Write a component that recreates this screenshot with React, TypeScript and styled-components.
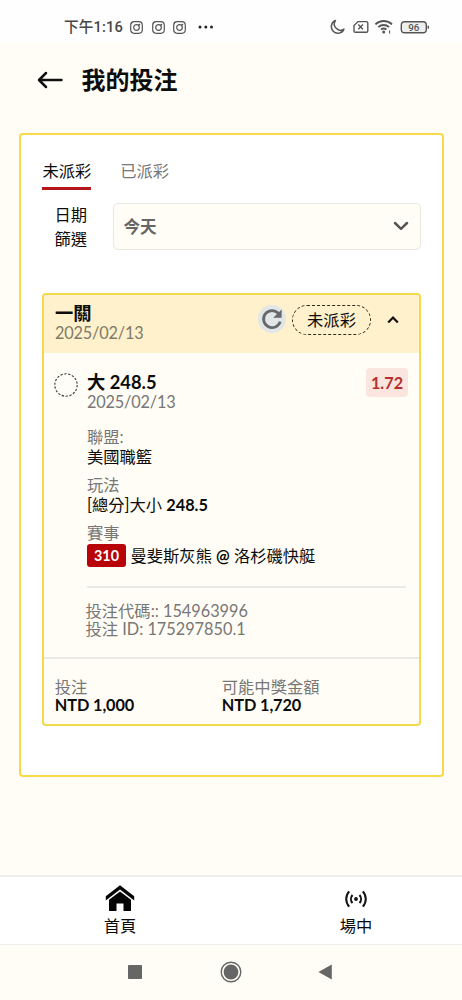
import React from 'react';
import styled, { createGlobalStyle } from 'styled-components';

const GlobalStyle = createGlobalStyle`
  * { box-sizing: border-box; }
  body {
    margin: 0;
    background: #fffdf5;
    color: #0c0c0c;
    font-family: Lato, "Noto Sans CJK TC", sans-serif;
    font-size: 16.3px;
  }
`;

const Screen = styled.div`
  width: 462px;
  height: 1000px;
  display: flex;
  flex-direction: column;
  overflow: hidden;
`;

const StatusBar = styled.header`
  height: 42px;
  padding: 13px 31px 0 64px;
  display: flex;
  justify-content: space-between;
  background: #fefefe;
  color: #474747;
`;

const StatusGroup = styled.div<{ $gap: number }>`
  height: 28px;
  display: flex;
  align-items: center;
  gap: ${p => p.$gap}px;
`;

const Clock = styled.span`
  font: 500 14.7px/28px Roboto, "Noto Sans CJK SC", sans-serif;
  letter-spacing: 0.1px;
  margin-right: -1px;
`;

const MoreDots = styled.svg`
  margin-left: 1.5px;
`;

const TitleBar = styled.div`
  height: 91px;
  padding: 16px 0 0 37px;
  display: flex;
  align-items: flex-start;
  gap: 17.5px;
`;

const Title = styled.h1`
  margin: 0;
  font-size: 24px;
  font-weight: 600;
  line-height: 44px;
`;

const BackIcon = styled.svg`
  display: block;
  margin-top: 12px;
`;

const Panel = styled.main`
  height: 644px;
  margin: 0 18.5px 0 19px;
  padding: 24px 20.5px 0 21px;
  border: 2px solid #f8da48;
  border-radius: 4px;
  background: #fff;
`;

const Tabs = styled.nav`
  display: flex;
  gap: 29px;
  padding-left: 0.4px;
  height: 44px;
`;

const Tab = styled.div<{ $active?: boolean }>`
  height: 31px;
  line-height: 24px;
  color: ${p => (p.$active ? '#0c0c0c' : '#777')};
  border-bottom: 3px solid ${p => (p.$active ? '#b5171b' : 'transparent')};
`;

const FilterRow = styled.div`
  display: flex;
  justify-content: space-between;
  height: 47px;
`;

const FilterLabel = styled.div`
  width: 34px;
  margin-left: 12.4px;
  line-height: 24px;
`;

const Select = styled.div`
  width: 308px;
  height: 47px;
  padding: 0 11px 1px 9.5px;
  display: flex;
  align-items: center;
  justify-content: space-between;
  border: 1px solid #e9e7e0;
  border-radius: 5px;
  background: #fffdf5;
  color: #666;
  font-size: 16.6px;
  font-weight: 600;
`;

const Ticket = styled.section`
  height: 433px;
  margin-top: 43px;
  border: 2px solid #f3d94c;
  border-radius: 4px;
  background: #fffdf5;
  overflow: hidden;
`;

const TicketHead = styled.div`
  height: 58px;
  padding: 8px 20px 0 11px;
  display: flex;
  justify-content: space-between;
  background: #fef1cb;
`;

const HeadActions = styled.div`
  height: 34px;
  display: flex;
  align-items: center;
`;

const Refresh = styled.div`
  width: 28px;
  height: 28px;
  margin-top: -2px;
  display: grid;
  place-items: center;
  border-radius: 50%;
  background: #e2e6e7;
`;

const StatusPill = styled.div`
  width: 79px;
  height: 30px;
  margin: 0 16px 0 6px;
  border: 1px dashed #302b1d;
  border-radius: 15px;
  line-height: 27px;
  text-align: center;
`;

const Line = styled.div<{ $tone?: 'muted'; $bold?: boolean }>`
  height: 19.5px;
  line-height: 19.5px;
  white-space: nowrap;
  color: ${p => (p.$tone === 'muted' ? '#777' : '#0c0c0c')};
  font-weight: ${p => (p.$bold ? 700 : 400)};
`;

const Heading = styled(Line)`
  font-size: 18.3px;
  line-height: 20.5px;
`;

const DateLine = styled(Line)`
  letter-spacing: -0.17px;
`;

const HeadDate = styled(DateLine)`
  color: #817a68;
`;

const Selection = styled.div`
  height: 69px;
  padding: 19px 11px 0 10px;
  display: flex;
`;

const DashedCircle = styled.svg`
  display: block;
  margin-top: 1px;
`;

const SelectionText = styled.div`
  flex: 1;
  margin-left: 9px;
`;

const Odds = styled.div`
  width: 42px;
  height: 29px;
  margin-top: -4px;
  border-radius: 4px;
  background: #fae5df;
  color: #b5302c;
  font-weight: 700;
  line-height: 29px;
  text-align: center;
`;

const Details = styled.div`
  margin: 5px 13px 0 43px;
  height: 161px;
  border-bottom: 2px solid #eceae5;
`;

const Field = styled.div`
  height: 48.2px;
`;

const Matchup = styled.div`
  display: flex;
  align-items: center;
  gap: 4.5px;
  height: 24px;
  white-space: nowrap;
`;

const GameNumber = styled.span`
  width: 39px;
  height: 23px;
  margin-top: 1px;
  border-radius: 3px;
  background: #b80408;
  color: #fff;
  font-size: 14.4px;
  font-weight: 700;
  line-height: 23px;
  text-align: center;
`;

const Strong = styled.span`
  font-weight: 700;
`;

const Codes = styled.div`
  height: 71px;
  padding: 13px 0 0 41.5px;
  border-bottom: 2px solid #eceae5;
  ${Line} { height: 18px; }
`;

const Totals = styled.div`
  display: grid;
  grid-template-columns: 167px 1fr;
  padding: 17.6px 0 0 10.8px;
  ${Line} { height: 18px; }
`;

const Amount = styled(Line)`
  letter-spacing: -0.1px;
`;

const BottomNav = styled.nav`
  height: 70px;
  margin-top: 98px;
  display: grid;
  grid-template-columns: 240px 232px;
  border: solid #f0efed;
  border-width: 2px 0 1px;
  background: #fff;
`;

const NavItem = styled.div`
  display: flex;
  flex-direction: column;
  align-items: center;
  padding-top: 7px;
  line-height: 24px;
  svg { display: block; }
`;

const SystemBar = styled.footer`
  flex: 1;
  padding: 0 0 1px 128px;
  display: flex;
  align-items: center;
`;

const Instagram = () => (
  <svg width="13" height="13" viewBox="0 0 13 13" fill="none" stroke="#555" strokeWidth="1.2">
    <rect x=".7" y=".7" width="11.6" height="11.6" rx="3.5" />
    <circle cx="6.5" cy="6.5" r="2.8" />
    <path d="M8.6 4.3 10 3" />
  </svg>
);

export default function App() {
  return (
    <>
      <GlobalStyle />
      <Screen>
        <StatusBar>
          <StatusGroup $gap={8.5}>
            <Clock>下午1:16</Clock>
            <Instagram />
            <Instagram />
            <Instagram />
            <MoreDots width="17" height="4" viewBox="0 0 17 4" fill="#222">
              <circle cx="4" cy="2" r="1.5" />
              <circle cx="9.8" cy="2" r="1.5" />
              <circle cx="15.5" cy="2" r="1.5" />
            </MoreDots>
          </StatusGroup>
          <StatusGroup $gap={0}>
            <svg width="102" height="18" viewBox="0 0 102 18" fill="none" stroke="#555" strokeWidth="1.4">
              <path d="M6.5 2.5A6.6 6.6 0 1 0 15 11.2 6.2 6.2 0 0 1 6.5 2.5Z" strokeLinejoin="round" />
              <path d="M29 3.6h8.5a1.3 1.3 0 0 1 1.3 1.3v8a1.3 1.3 0 0 1-1.3 1.3H26.3a1.3 1.3 0 0 1-1.3-1.3V7.6Z" />
              <path d="m29.3 6.6 4.6 4.6m0-4.6-4.6 4.6" />
              <path d="M46.4 6.4a12 12 0 0 1 16.6 0M49.3 9.1a8 8 0 0 1 10.8 0M52 11.6a4.2 4.2 0 0 1 5.4 0" strokeWidth="1.9" />
              <circle cx="54.7" cy="14" r="1.5" fill="#555" stroke="none" />
              <path d="M60.6 12.5v3" strokeWidth="1.1" />
              <rect x="72.3" y="3.7" width="25" height="11" rx="3.3" fill="#eee" />
              <path d="M99.3 7.7v3" strokeWidth="1.5" />
              <text x="84.8" y="12.7" textAnchor="middle" fill="#555" stroke="none" fontSize="9.8" fontWeight="500" fontFamily="Roboto, sans-serif">96</text>
            </svg>
          </StatusGroup>
        </StatusBar>

        <TitleBar>
          <BackIcon width="27" height="20" viewBox="0 0 27 20" fill="none" stroke="#111" strokeWidth="2.5">
            <path d="M9 3 2 10l7 7M2.5 10h22" strokeLinejoin="round" strokeLinecap="round" />
          </BackIcon>
          <Title>我的投注</Title>
        </TitleBar>

        <Panel>
          <Tabs>
            <Tab $active>未派彩</Tab>
            <Tab>已派彩</Tab>
          </Tabs>
          <FilterRow>
            <FilterLabel>日期篩選</FilterLabel>
            <Select>
              今天
              <svg width="16" height="10" viewBox="0 0 16 10" fill="none" stroke="#555" strokeWidth="2.5" strokeLinecap="round" strokeLinejoin="round">
                <path d="m2 2 6 5.8L14 2" />
              </svg>
            </Select>
          </FilterRow>

          <Ticket>
            <TicketHead>
              <div>
                <Heading $bold>一關</Heading>
                <HeadDate>2025/02/13</HeadDate>
              </div>
              <HeadActions>
                <Refresh>
                  <svg width="24" height="24" viewBox="0 0 24 24" fill="none" stroke="#66686c" strokeWidth="2.8">
                    <path d="M18.6 6.6A8.5 8.5 0 1 0 20.2 14.6" />
                    <path d="M21.6 2.4v8.4h-8.4Z" fill="#66686c" stroke="none" />
                  </svg>
                </Refresh>
                <StatusPill>未派彩</StatusPill>
                <svg width="12" height="8" viewBox="0 0 12 8" fill="none" stroke="#111" strokeWidth="2.2">
                  <path d="m1.2 6.6 4.8-5 4.8 5" />
                </svg>
              </HeadActions>
            </TicketHead>

            <Selection>
              <DashedCircle width="24" height="24" viewBox="0 0 24 24" fill="none" stroke="#333">
                <circle cx="12" cy="12" r="11.2" strokeDasharray="2.3 1.6" strokeWidth="1.1" />
              </DashedCircle>
              <SelectionText>
                <Heading $bold>大 248.5</Heading>
                <DateLine $tone="muted">2025/02/13</DateLine>
              </SelectionText>
              <Odds>1.72</Odds>
            </Selection>

            <Details>
              <Field>
                <Line $tone="muted">聯盟:</Line>
                <Line>美國職籃</Line>
              </Field>
              <Field>
                <Line $tone="muted">玩法</Line>
                <Line>[總分]大小 <Strong>248.5</Strong></Line>
              </Field>
              <Line $tone="muted">賽事</Line>
              <Matchup>
                <GameNumber>310</GameNumber>
                <span>曼斐斯灰熊 <Strong>@</Strong> 洛杉磯快艇</span>
              </Matchup>
            </Details>

            <Codes>
              <Line $tone="muted">投注代碼:: 154963996</Line>
              <Line $tone="muted">投注 ID: 175297850.1</Line>
            </Codes>

            <Totals>
              <div>
                <Line $tone="muted">投注</Line>
                <Amount $bold>NTD 1,000</Amount>
              </div>
              <div>
                <Line $tone="muted">可能中獎金額</Line>
                <Amount $bold>NTD 1,720</Amount>
              </div>
            </Totals>
          </Ticket>
        </Panel>

        <BottomNav>
          <NavItem>
            <svg width="30" height="30" viewBox="0 0 30 30" fill="#050505">
              <path d="M.8 12.2 15 1.2l14.2 11v4.2L15 5.6.8 16.4Z" />
              <path d="M15 7.4 26 15.7V27h-7.5v-7.4h-7V27H4V15.7Z" />
            </svg>
            首頁
          </NavItem>
          <NavItem>
            <svg width="24" height="30" viewBox="0 0 24 30" fill="none" stroke="#111" strokeWidth="2">
              <circle cx="12" cy="15" r="1.9" fill="#111" stroke="none" />
              <path d="M8.5 11a6 6 0 0 0 0 8M15.5 11a6 6 0 0 1 0 8M5.2 7.3a11.5 11.5 0 0 0 0 15.4M18.8 7.3a11.5 11.5 0 0 1 0 15.4" />
            </svg>
            場中
          </NavItem>
        </BottomNav>

        <SystemBar>
          <svg width="206" height="24" viewBox="0 0 206 24" fill="#666">
            <rect x="0" y="5" width="14" height="14" rx=".8" />
            <circle cx="103" cy="12" r="7.4" />
            <circle cx="103" cy="12" r="9.8" fill="none" stroke="#666" strokeWidth="1.4" />
            <path d="M190.4 12 203.8 4.4v15.2Z" />
          </svg>
        </SystemBar>
      </Screen>
    </>
  );
}
